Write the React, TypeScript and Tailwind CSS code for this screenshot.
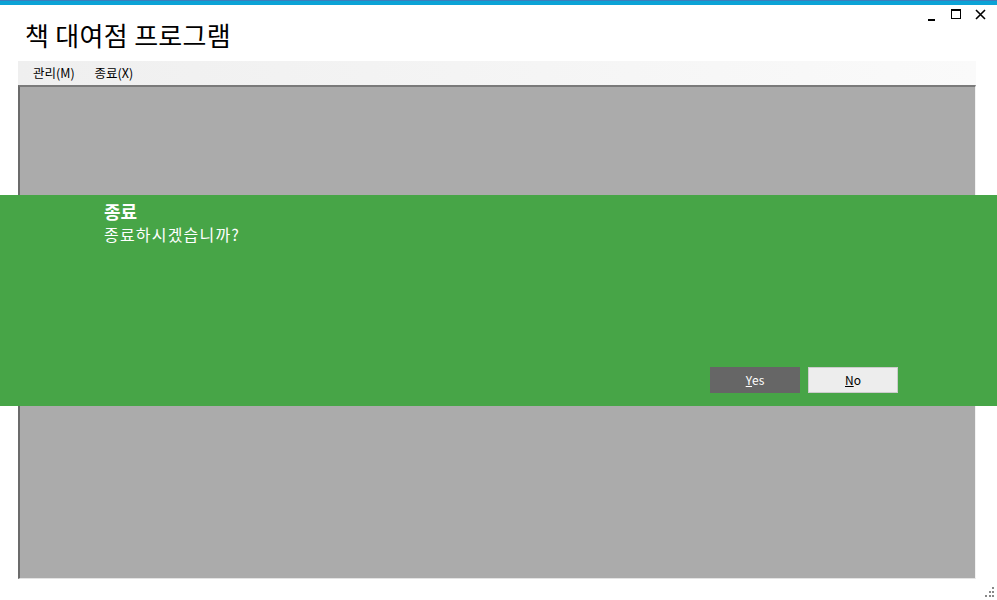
import React from "react";

const KR = { fontFamily: '"Noto Sans CJK KR", "Noto Sans", sans-serif' };

export default function App() {
  return (
    <div className="relative w-[997px] h-[600px] bg-white overflow-hidden" style={KR}>
      <div className="h-[1px] bg-[#3b7ebd]" />
      <div className="h-[4px] bg-[#0ca3d6]" />
      <div className="flex h-[56px]">
        <div className="pl-[25px] pt-[14px] text-[26px] leading-[32px] text-black tracking-[0.3px]">책 대여점 프로그램</div>
        <div className="ml-auto flex items-start gap-[14px] pr-[11px] pt-[4px]">
          <div className="w-[9px] h-[12px] flex items-end"><div className="w-[7px] h-[2px] bg-black" /></div>
          <div className="w-[10px] h-[10px] border border-black border-t-2" />
          <svg width="11" height="11" viewBox="0 0 11 11"><path d="M1 1 L10 10 M10 1 L1 10" stroke="black" strokeWidth="1.6" /></svg>
        </div>
      </div>
      <div className="mx-[18px] w-[958px] flex flex-col">
        <div className="h-[24px] flex items-center gap-[20px] pl-[15px] text-[12.5px] text-black bg-gradient-to-r from-[#efefef] to-[#fafafa]">
          <span>관리(M)</span>
          <span>종료(X)</span>
        </div>
        <div className="h-[494px] bg-[#ababab] border-l-2 border-t-2 border-l-[#6b6b6b] border-t-[#7a7a7a] border-b border-b-[#e3e3e3] border-r border-r-[#f2f2f2]" />
      </div>
      <div className="absolute right-[3px] bottom-[3px] w-[10px] h-[10px]">
        <svg width="10" height="10" viewBox="0 0 10 10" fill="#888">
          <rect x="8" y="0" width="2" height="2" />
          <rect x="5" y="4" width="2" height="2" />
          <rect x="8" y="4" width="2" height="2" />
          <rect x="1" y="8" width="2" height="2" />
          <rect x="5" y="8" width="2" height="2" />
          <rect x="8" y="8" width="2" height="2" />
        </svg>
      </div>
      <div className="absolute left-0 top-[195px] w-[997px] h-[211px] bg-[#47a547] flex flex-col">
        <div className="pl-[104px] pt-[4px] text-white">
          <div className="text-[18px] font-bold leading-[24px]">종료</div>
          <div className="text-[16px] leading-[22px] tracking-[1.2px]">종료하시겠습니까?</div>
        </div>
        <div className="mt-auto mb-[13px] flex gap-[8px] pl-[710px] text-[12px]">
          <button className="w-[90px] h-[26px] bg-[#666666] text-white flex items-center justify-center" style={KR}><span className="underline">Y</span>es</button>
          <button className="w-[90px] h-[26px] bg-[#ededed] border border-[#cccccc] text-black flex items-center justify-center" style={KR}><span className="underline">N</span>o</button>
        </div>
      </div>
    </div>
  );
}
